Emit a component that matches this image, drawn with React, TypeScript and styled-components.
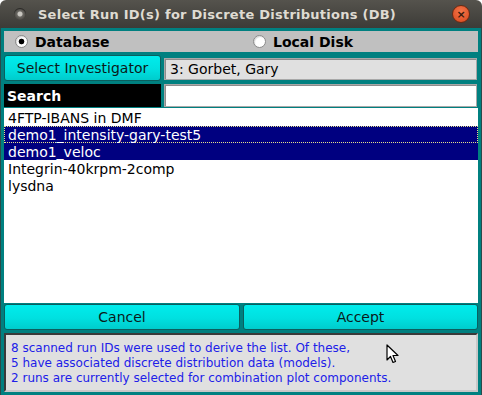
import React, { useState } from 'react';
import styled, { createGlobalStyle } from 'styled-components';

const GlobalStyle = createGlobalStyle`
  html, body {
    margin: 0;
    padding: 0;
    background: #ffffff;
  }
  * {
    box-sizing: border-box;
  }
`;

const Window = styled.div`
  position: relative;
  width: 482px;
  height: 395px;
  display: flex;
  flex-direction: column;
  font-family: 'DejaVu Sans', 'Liberation Sans', sans-serif;
  overflow: hidden;
`;

const TitleBar = styled.div`
  height: 28px;
  flex: none;
  display: flex;
  align-items: center;
  padding: 0 10px 0 14px;
  gap: 12px;
  background: linear-gradient(#55534d, #3c3b37);
  border-radius: 6px 6px 0 0;
`;

const MenuDot = styled.div`
  width: 12px;
  height: 12px;
  border-radius: 50%;
  background: radial-gradient(circle at 50% 50%, #c8c6c0 0 2px, #6a6863 3px, #4a4843 6px);
  box-shadow: inset 0 1px 1px rgba(0, 0, 0, 0.5);
`;

const Title = styled.div`
  flex: 1;
  color: #dfdbd2;
  font-weight: bold;
  font-size: 13px;
  letter-spacing: 0.25px;
`;

const CloseButton = styled.div`
  width: 18px;
  height: 18px;
  margin-right: 2px;
  border-radius: 50%;
  background: radial-gradient(circle at 50% 35%, #f4764a, #d8461c);
  border: 1px solid #6b2a12;
  display: flex;
  align-items: center;
  justify-content: center;
  color: #3a1a0c;
  font-size: 11px;
  font-weight: bold;
  line-height: 1;
`;

const Body = styled.div`
  flex: 1;
  background: #008080;
  padding: 3px 3px 3px 3px;
  display: flex;
  flex-direction: column;
  border-left: 1px solid #2a4a4a;
  border-right: 1px solid #2a4a4a;
`;

const RadioRow = styled.div`
  height: 21px;
  background: #c0c0c0;
  display: grid;
  grid-template-columns: 238px 1fr;
  align-items: center;
  padding-left: 11px;
`;

const RadioOption = styled.label`
  display: flex;
  align-items: center;
  gap: 7px;
  font-weight: bold;
  font-size: 14px;
  color: #000;
`;

const RadioCircle = styled.span<{ checked?: boolean }>`
  width: 13px;
  height: 13px;
  border-radius: 50%;
  border: 1px solid #8a8a8a;
  background: ${p => (p.checked ? 'radial-gradient(circle, #000 0 2.5px, #fff 3.2px)' : '#fff')};
  box-shadow: inset 1px 1px 1px rgba(0, 0, 0, 0.15);
`;

const FieldRow = styled.div<{ h: number; mt: number }>`
  display: grid;
  grid-template-columns: 157px 1fr;
  column-gap: 3px;
  height: ${p => p.h}px;
  margin-top: ${p => p.mt}px;
`;

const CyanButton = styled.button`
  background: linear-gradient(#00ecec 0%, #00e0e0 55%, #00cccc 100%);
  border: 1px solid #0b5f5f;
  border-radius: 3px;
  font-family: inherit;
  font-size: 14px;
  color: #0a1a1a;
  padding: 0;
  margin: 0;
  cursor: pointer;
`;

const ReadOnlyField = styled.div`
  margin: 3px 1px 1px 0;
  background: #e0e0e0;
  border: 1px solid #a8a8a8;
  box-shadow: inset 1px 1px 0 #8c8c8c;
  font-size: 14px;
  color: #000;
  display: flex;
  align-items: center;
  padding-left: 5px;
`;

const SearchLabel = styled.div`
  background: #000;
  color: #fff;
  font-weight: bold;
  font-size: 14px;
  display: flex;
  align-items: center;
  padding-left: 3px;
`;

const SearchInput = styled.input`
  border: 1px solid #a8a8a8;
  box-shadow: inset 1px 1px 0 #8c8c8c;
  background: #fff;
  font-family: inherit;
  font-size: 14px;
  padding: 0 4px;
  margin: 0 1px 0 0;
  outline: none;
`;

const List = styled.div`
  margin-top: 1px;
  height: 195px;
  background: #fff;
  padding-top: 1px;
`;

const ListItem = styled.div<{ selected?: boolean; focused?: boolean }>`
  height: 17px;
  line-height: 16px;
  font-size: 14px;
  padding-left: 3px;
  color: ${p => (p.selected ? '#fff' : '#000')};
  background: ${p => (p.selected ? '#000080' : 'transparent')};
  border: 1px dotted ${p => (p.focused ? '#e8e08a' : 'transparent')};
  white-space: nowrap;
`;

const ButtonRow = styled.div`
  display: grid;
  grid-template-columns: 236px 1fr;
  column-gap: 3px;
  height: 26px;
  margin-top: 1px;
`;

const InfoBox = styled.div`
  margin-top: 3px;
  flex: 1;
  background: #e0e0e0;
  border-top: 2px solid #3a3a3a;
  border-left: 2px solid #3a3a3a;
  border-right: 2px solid #c8c8c8;
  border-bottom: 2px solid #c8c8c8;
  padding: 6px 0 0 5px;
  color: #2020e8;
  font-size: 12px;
  line-height: 15px;
`;

const Cursor = styled.svg`
  position: absolute;
  left: 386px;
  top: 344px;
`;

const runs = [
  { id: '4FTP-IBANS in DMF' },
  { id: 'demo1_intensity-gary-test5' },
  { id: 'demo1_veloc' },
  { id: 'Integrin-40krpm-2comp' },
  { id: 'lysdna' },
];

const App: React.FC = () => {
  const [source, setSource] = useState<'db' | 'disk'>('db');
  const [selected] = useState<string[]>(['demo1_intensity-gary-test5', 'demo1_veloc']);
  const [search, setSearch] = useState('');

  return (
    <Window>
      <GlobalStyle />
      <TitleBar>
        <MenuDot />
        <Title>Select Run ID(s) for Discrete Distributions (DB)</Title>
        <CloseButton>×</CloseButton>
      </TitleBar>
      <Body>
        <RadioRow>
          <RadioOption onClick={() => setSource('db')}>
            <RadioCircle checked={source === 'db'} />
            Database
          </RadioOption>
          <RadioOption onClick={() => setSource('disk')}>
            <RadioCircle checked={source === 'disk'} />
            Local Disk
          </RadioOption>
        </RadioRow>

        <FieldRow h={26} mt={3}>
          <CyanButton>Select Investigator</CyanButton>
          <ReadOnlyField>3: Gorbet, Gary</ReadOnlyField>
        </FieldRow>

        <FieldRow h={23} mt={3}>
          <SearchLabel>Search</SearchLabel>
          <SearchInput value={search} onChange={e => setSearch(e.target.value)} />
        </FieldRow>

        <List>
          {runs
            .filter(r => r.id.toLowerCase().includes(search.toLowerCase()))
            .map((r, i) => (
              <ListItem key={r.id} selected={selected.includes(r.id)} focused={i === 1}>
                {r.id}
              </ListItem>
            ))}
        </List>

        <ButtonRow>
          <CyanButton>Cancel</CyanButton>
          <CyanButton>Accept</CyanButton>
        </ButtonRow>

        <InfoBox>
          8 scanned run IDs were used to derive the list. Of these,
          <br />
          5 have associated discrete distribution data (models).
          <br />
          2 runs are currently selected for combination plot components.
        </InfoBox>
      </Body>

      <Cursor width="13" height="21" viewBox="0 0 13 21">
        <path d="M1 1 L1 16 L4.5 12.5 L7 18.5 L9.5 17.5 L7 11.5 L12 11.5 Z" fill="#fff" stroke="#000" strokeWidth="1.2" strokeLinejoin="round" />
      </Cursor>
    </Window>
  );
};

export default App;
